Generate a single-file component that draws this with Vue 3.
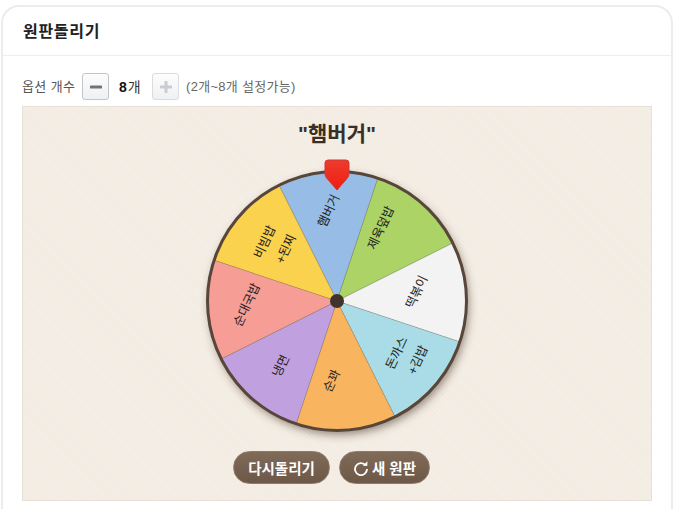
<template>
  <div class="page">
    <section class="card">
      <header class="card-head">
        <h2 class="card-title">원판돌리기</h2>
      </header>

      <div class="card-body">
        <div class="option-row">
          <span class="option-label">옵션 개수</span>
          <button class="step-btn">
            <svg width="12" height="12" viewBox="0 0 12 12"><rect x="0" y="4.500" width="12" height="3" rx="0.500" fill="#6f7378" /></svg>
          </button>
          <span class="option-count"><b>8</b>개</span>
          <button class="step-btn is-off">
            <svg width="12" height="12" viewBox="0 0 12 12"><path d="M4.500 0h3v4.500H12v3H7.500V12h-3V7.500H0v-3h4.500z" fill="#c9ccd2" /></svg>
          </button>
          <span class="option-note">(2개~8개 설정가능)</span>
        </div>

        <div class="stage">
          <h3 class="result">"햄버거"</h3>

          <div class="wheel-wrap">
            <svg class="wheel" width="290" height="290" viewBox="0 0 290 290">
              <defs>
                <filter id="wheel-shadow" x="-10%" y="-10%" width="120%" height="120%">
                  <feDropShadow dx="2" dy="4" stdDeviation="4" flood-color="#4a3828" flood-opacity="0.55" />
                </filter>
              </defs>
              <circle cx="145" cy="145" r="130" fill="#574639" filter="url(#wheel-shadow)" />
              <path v-for="s in slices" :key="s.name" :d="s.path" :fill="s.color" stroke="rgba(110,100,90,0.35)" stroke-width="0.600" />
              <circle cx="145" cy="145" r="129.500" fill="none" stroke="#574639" stroke-width="3" />
              <g v-for="s in slices" :key="s.name + '-label'">
                <text
                  v-for="line in s.lines"
                  :key="line.text"
                  class="slice-label"
                  text-anchor="middle"
                  dominant-baseline="central"
                  :transform="`translate(${line.x} ${line.y}) rotate(-65)`"
                >{{ line.text }}</text>
              </g>
              <circle cx="145" cy="145" r="7" fill="#3f332a" />
            </svg>

            <svg class="pin" width="26" height="33" viewBox="0 0 26 33">
              <defs>
                <linearGradient id="pin-fill" x1="0" y1="0" x2="0" y2="1">
                  <stop offset="0" stop-color="#ee3b2e" />
                  <stop offset="1" stop-color="#f01c12" />
                </linearGradient>
              </defs>
              <path d="M4 1h18a3 3 0 0 1 3 3v11c0 2-1 3-2 4.500L13 31 3 19.500C2 18 1 17 1 15V4a3 3 0 0 1 3-3z" fill="url(#pin-fill)" stroke="#cf3a2c" stroke-width="1" />
            </svg>
          </div>

          <div class="actions">
            <button class="pill pill-again">다시돌리기</button>
            <button class="pill pill-new">
              <svg width="16" height="16" viewBox="0 0 16 16">
                <path d="M12.800 5.500A6 6 0 1 0 14 9" fill="none" stroke="#fff" stroke-width="1.800" />
                <path d="M9.800 5.800h4.600V1.200z" fill="#fff" />
              </svg>
              새 원판
            </button>
          </div>
        </div>
      </div>
    </section>
  </div>
</template>

<script setup>
const CX = 145
const CY = 145
const R = 129
const START = -26.6
// wheel svg top-left on the page, labels below are measured in page coordinates
const ORIGIN_X = 192
const ORIGIN_Y = 156

const point = (deg) => {
  const rad = (deg * Math.PI) / 180
  return `${(CX + R * Math.sin(rad)).toFixed(2)} ${(CY - R * Math.cos(rad)).toFixed(2)}`
}

const raw = [
  { name: '햄버거', color: '#97bde6', lines: [{ text: '햄버거', x: 329, y: 211 }] },
  { name: '제육덮밥', color: '#abd366', lines: [{ text: '제육덮밥', x: 381, y: 228 }] },
  { name: '떡볶이', color: '#f3f3f3', lines: [{ text: '떡볶이', x: 417, y: 292 }] },
  { name: '돈까스', color: '#a9dce6', lines: [{ text: '돈까스', x: 397, y: 353 }, { text: '+김밥', x: 418, y: 360 }] },
  { name: '순꽈', color: '#f8b45e', lines: [{ text: '순꽈', x: 332, y: 381 }] },
  { name: '냉면', color: '#c0a0de', lines: [{ text: '냉면', x: 281, y: 366 }] },
  { name: '순대국밥', color: '#f69d96', lines: [{ text: '순대국밥', x: 247, y: 305 }] },
  { name: '비빔밥', color: '#fbd24e', lines: [{ text: '비빔밥', x: 265, y: 242 }, { text: '+된찌', x: 286, y: 249 }] }
]

const slices = raw.map((s, i) => {
  const a = START + i * 45
  return {
    ...s,
    path: `M${CX} ${CY}L${point(a)}A${R} ${R} 0 0 1 ${point(a + 45)}Z`,
    lines: s.lines.map((l) => ({ ...l, x: l.x - ORIGIN_X, y: l.y - ORIGIN_Y }))
  }
})
</script>

<style scoped>
.page {
  width: 687px;
  height: 509px;
  overflow: hidden;
  background: #fff;
  padding: 5px 0 0 1px;
  box-sizing: border-box;
  font-family: "Liberation Sans", "Noto Sans CJK KR", sans-serif;
}

.card {
  width: 672px;
  height: 540px;
  box-sizing: border-box;
  border: 2px solid #ececec;
  border-radius: 18px;
}

.card-head {
  height: 49px;
  border-bottom: 1px solid #eeeeee;
  padding: 0 0 2px 20px;
  box-sizing: border-box;
  display: flex;
  align-items: center;
}

.card-title {
  margin: 0;
  font-size: 16px;
  letter-spacing: 0.700px;
  font-weight: 700;
  color: #222;
}

.card-body {
  padding: 17px 19px 0;
}

.option-row {
  display: flex;
  align-items: center;
  height: 27px;
  font-size: 13px;
  color: #555;
}

.option-label {
  width: 60px;
  margin-bottom: 2px;
  letter-spacing: 0.400px;
}

.step-btn {
  width: 27px;
  height: 27px;
  padding: 0;
  display: flex;
  align-items: center;
  justify-content: center;
  background: linear-gradient(#fdfdfd, #eef0f3);
  border: 1px solid #c4c4c4;
  border-radius: 3px;
}

.step-btn.is-off {
  border-color: #dcdcdc;
}

.option-count {
  width: 43px;
  margin-bottom: 2px;
  padding-left: 10px;
  box-sizing: border-box;
  font-size: 14px;
  color: #333;
}

.option-count b {
  color: #111;
  margin-right: 1px;
}

.option-note {
  margin: 0 0 2px 7px;
  font-size: 13px;
  letter-spacing: 0.300px;
  color: #666;
}

.stage {
  margin-top: 6px;
  width: 630px;
  height: 395px;
  box-sizing: border-box;
  display: flex;
  flex-direction: column;
  align-items: center;
  border: 1px solid #e6e1d6;
  background-color: #f3ece2;
  background-image: repeating-linear-gradient(45deg, rgba(255, 255, 255, 0.18) 0 1px, transparent 1px 3px);
}

.result {
  margin: 13px 0 0;
  height: 27px;
  font-size: 21px;
  line-height: 27px;
  font-weight: 700;
  color: #3a2f27;
}

.wheel-wrap {
  position: relative;
  width: 290px;
  height: 290px;
  margin-top: 9px;
}

.wheel {
  display: block;
}

.slice-label {
  font-size: 12.500px;
  fill: #222;
}

.pin {
  position: absolute;
  left: 132px;
  top: 3px;
}

.actions {
  display: flex;
  gap: 9px;
  margin: 5px 11px 0 0;
}

.pill {
  height: 33px;
  padding: 0;
  display: flex;
  align-items: center;
  justify-content: center;
  gap: 3px;
  font-family: inherit;
  font-size: 14.500px;
  font-weight: 700;
  color: #fff;
  background: linear-gradient(#806a58, #6d5746);
  border: 1px solid #8d7b6b;
  border-radius: 17px;
}

.pill-again {
  width: 97px;
}

.pill-new {
  width: 91px;
}
</style>
